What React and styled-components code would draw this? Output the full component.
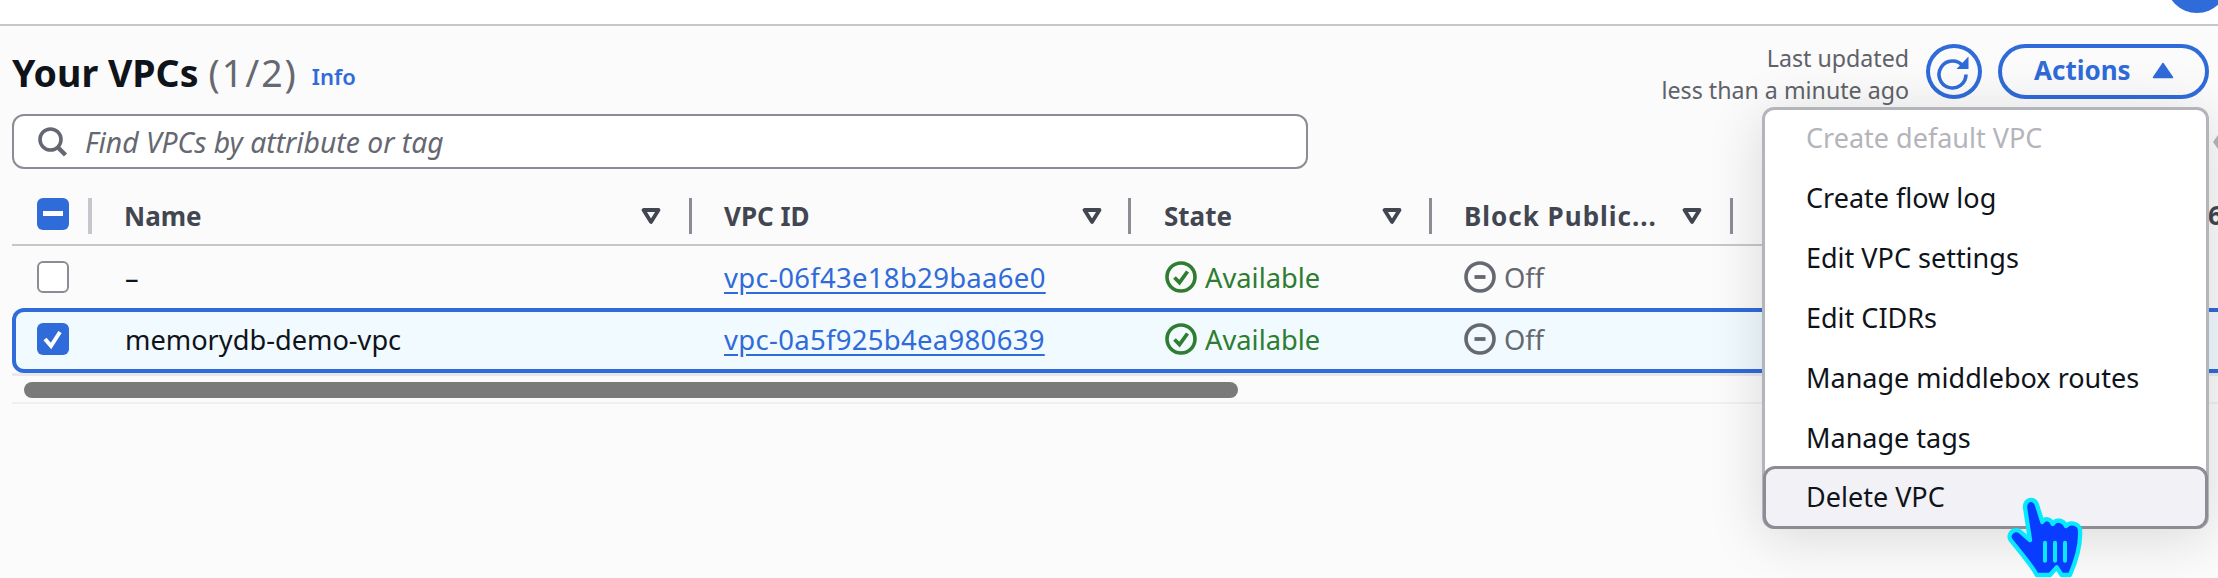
import React from "react";
import styled, { createGlobalStyle } from "styled-components";

const Global = createGlobalStyle`
  html, body { margin: 0; padding: 0; background: #fbfbfb; }
  body { font-family: "Noto Sans", "Open Sans", sans-serif; overflow: hidden; }
`;

const Page = styled.div`
  position: relative;
  width: 2218px;
  height: 578px;
  overflow: hidden;
  background: #fbfbfb;
`;

const TopBar = styled.div`
  height: 24px;
  background: #fff;
  border-bottom: 2px solid #c6c6cd;
`;

const Avatar = styled.div`
  position: absolute;
  left: 2166px;
  top: -49px;
  width: 62px;
  height: 62px;
  border-radius: 50%;
  background: #2f6bd9;
`;

const Content = styled.div`
  padding: 16px 9px 0 12px;
`;

const HeaderRow = styled.div`
  display: flex;
  justify-content: space-between;
  align-items: flex-start;
  height: 72px;
`;

const Title = styled.h1`
  margin: 0;
  padding-top: 9px;
  display: flex;
  align-items: baseline;
  font-size: 37.5px;
  line-height: 44px;
  font-weight: 700;
  color: #0f141a;
`;

const Count = styled.span`
  margin-left: 10px;
  font-weight: 400;
  letter-spacing: 2px;
  color: #656871;
`;

const InfoLink = styled.a`
  margin-left: 14px;
  font-size: 22px;
  font-weight: 600;
  color: #2f6bd9;
  transform: translateY(-2px);
`;

const Tools = styled.div`
  display: flex;
  align-items: flex-start;
`;

const Updated = styled.div`
  width: 300px;
  margin-right: 17px;
  text-align: right;
  font-size: 23.2px;
  line-height: 32px;
  color: #5f6269;
`;

const RefreshButton = styled.div`
  box-sizing: border-box;
  width: 56px;
  height: 55px;
  margin-top: 2px;
  margin-right: 16px;
  display: flex;
  align-items: center;
  justify-content: center;
  border: 4px solid #2f6bd9;
  border-radius: 50%;
`;

const ActionsButton = styled.div`
  box-sizing: border-box;
  width: 211px;
  height: 55px;
  margin-top: 2px;
  padding: 0 0 3px 32px;
  display: flex;
  align-items: center;
  gap: 21px;
  border: 4px solid #2f6bd9;
  border-radius: 28px;
  font-size: 26px;
  font-weight: 700;
  color: #2f6bd9;
`;

const SearchBox = styled.div`
  box-sizing: border-box;
  width: 1296px;
  height: 55px;
  display: flex;
  align-items: center;
  gap: 17px;
  padding-left: 24px;
  background: #fff;
  border: 2px solid #8c8c94;
  border-radius: 12px;
`;

const Placeholder = styled.span`
  font-size: 28.3px;
  font-style: italic;
  color: #656871;
`;

const TableHead = styled.div`
  margin-top: 29px;
  display: flex;
  align-items: stretch;
  height: 46px;
  border-bottom: 2px solid #c6c6cd;
`;

const CheckCell = styled.div`
  box-sizing: border-box;
  width: 76px;
  padding-left: 25px;
  display: flex;
  align-items: ${(p) => (p.$top ? "flex-start" : "center")};
`;

const HeadCell = styled.div`
  box-sizing: border-box;
  width: ${(p) => p.$w}px;
  height: 36px;
  display: flex;
  align-items: center;
  justify-content: space-between;
  padding-left: ${(p) => p.$pl}px;
  padding-right: ${(p) => p.$pr}px;
  border-left: ${(p) => (p.$first ? 4 : 3)}px solid ${(p) => (p.$first ? "#c6c6cd" : "#8c8c94")};
  font-size: 26px;
  font-weight: 700;
  letter-spacing: ${(p) => p.$ls || 0}px;
  color: #424650;
  white-space: nowrap;
`;

const Box = styled.div`
  box-sizing: border-box;
  width: 32px;
  height: 32px;
  display: flex;
  align-items: center;
  justify-content: center;
  border-radius: 6px;
  background: ${(p) => (p.$on ? "#2f6bd9" : "#fff")};
  border: ${(p) => (p.$on ? "none" : "2px solid #8c8c94")};
`;

const Row = styled.div`
  box-sizing: border-box;
  display: flex;
  align-items: center;
  height: ${(p) => (p.$selected ? 65 : 62)}px;
  padding-bottom: ${(p) => (p.$selected ? 3 : 0)}px;
  margin-right: -30px;
  background: ${(p) => (p.$selected ? "#f1faff" : "transparent")};
  box-shadow: ${(p) => (p.$selected ? "inset 0 0 0 4px #2f6bd9" : "none")};
  border-radius: ${(p) => (p.$selected ? 12 : 0)}px;
`;

const NameCell = styled.div`
  box-sizing: border-box;
  width: 636px;
  padding-left: 37px;
  font-size: 27.2px;
  color: #0f141a;
`;

const IdCell = styled.div`
  box-sizing: border-box;
  width: 441px;
`;

const IdLink = styled.a`
  font-size: 27.5px;
  letter-spacing: 0.3px;
  color: #2f6bd9;
  text-decoration: underline;
  text-underline-offset: 4px;
`;

const StateCell = styled.div`
  width: 299px;
  display: flex;
  align-items: center;
  gap: 8px;
  font-size: 27.3px;
  color: ${(p) => p.$color};
`;

const Track = styled.div`
  box-sizing: border-box;
  height: 31px;
  margin-right: -30px;
  border-top: 3px solid #e9e9ed;
  border-bottom: 2px solid #f0f0f0;
  padding: 6px 0 0 12px;
`;

const Thumb = styled.div`
  width: 1214px;
  height: 16px;
  border-radius: 8px;
  background: #7a7a7a;
`;

const Menu = styled.div`
  position: absolute;
  left: 1762px;
  top: 107px;
  box-sizing: border-box;
  width: 447px;
  height: 422px;
  background: #fff;
  border: 3px solid #b4b4bb;
  border-radius: 12px;
  box-shadow: 0 8px 56px rgba(0, 7, 22, 0.14);
`;

const MenuList = styled.div`
  margin-top: -3px;
`;

const MenuItem = styled.div`
  box-sizing: border-box;
  height: 60px;
  display: flex;
  align-items: center;
  padding-left: 41px;
  font-size: 27px;
  color: ${(p) => (p.$disabled ? "#b4b4bb" : "#0f141a")};
`;

const HoverItem = styled(MenuItem)`
  position: absolute;
  left: -2px;
  right: -2px;
  bottom: -3px;
  height: 63px;
  padding-left: 40px;
  padding-bottom: 2px;
  background: #f1f1f6;
  border: 3px solid #8c8c94;
  border-radius: 12px;
`;

const Cursor = styled.svg`
  position: absolute;
  left: 1980px;
  top: 480px;
`;

const EdgeGlyph = styled.span`
  position: absolute;
  left: 2208px;
  top: 197px;
  font-size: 26px;
  line-height: 36px;
  color: #424650;
  font-weight: 700;
`;

const EdgeArrow = styled.svg`
  position: absolute;
  left: 2213px;
  top: 135px;
`;

const Filter = () => (
  <svg width="20" height="20" viewBox="0 0 20 20">
    <path d="M2.5 4h15L10 16z" fill="none" stroke="#424650" strokeWidth="3.8" strokeLinejoin="round" />
  </svg>
);

const OkIcon = () => (
  <svg width="32" height="32" viewBox="0 0 32 32">
    <circle cx="16" cy="16" r="14" fill="none" stroke="#2e7d32" strokeWidth="3.6" />
    <path d="M9.5 16.5l5 5 8-11" fill="none" stroke="#2e7d32" strokeWidth="3.8" />
  </svg>
);

const OffIcon = () => (
  <svg width="32" height="32" viewBox="0 0 32 32">
    <circle cx="16" cy="16" r="14" fill="none" stroke="#656871" strokeWidth="3.6" />
    <path d="M10.5 16h11" fill="none" stroke="#656871" strokeWidth="3.8" />
  </svg>
);

const Check = () => (
  <svg width="22" height="22" viewBox="0 0 22 22">
    <path d="M3 11l6 7 9-14" fill="none" stroke="#fff" strokeWidth="4" />
  </svg>
);

const Minus = () => (
  <svg width="20" height="6" viewBox="0 0 20 6">
    <rect width="20" height="5" fill="#fff" />
  </svg>
);

const rows = [
  { name: "–", id: "vpc-06f43e18b29baa6e0" },
  { name: "memorydb-demo-vpc", id: "vpc-0a5f925b4ea980639", selected: true },
];

const items = ["Create flow log", "Edit VPC settings", "Edit CIDRs", "Manage middlebox routes", "Manage tags"];

export default function App() {
  return (
    <Page>
      <Global />
      <TopBar />
      <Avatar />
      <Content>
        <HeaderRow>
          <Title>
            Your VPCs<Count>(1/2)</Count>
            <InfoLink>Info</InfoLink>
          </Title>
          <Tools>
            <Updated>
              Last updated
              <br />
              less than a minute ago
            </Updated>
            <RefreshButton>
              <svg width="36" height="36" viewBox="0 0 36 36">
                <path d="M27 12A13.5 13.5 0 1 0 30 20.5" fill="none" stroke="#2f6bd9" strokeWidth="3.6" />
                <path d="M20.5 15h12V2.5z" fill="#2f6bd9" />
              </svg>
            </RefreshButton>
            <ActionsButton>
              Actions
              <svg width="22" height="17" viewBox="0 0 22 17">
                <path d="M11 1.5l9.5 14h-19z" fill="#2f6bd9" stroke="#2f6bd9" strokeWidth="1.5" strokeLinejoin="round" />
              </svg>
            </ActionsButton>
          </Tools>
        </HeaderRow>
        <SearchBox>
          <svg width="30" height="30" viewBox="0 0 30 30">
            <circle cx="12.5" cy="12.5" r="10.5" fill="none" stroke="#656871" strokeWidth="3.6" />
            <path d="M19.5 20l8 8" stroke="#656871" strokeWidth="4.4" />
          </svg>
          <Placeholder>Find VPCs by attribute or tag</Placeholder>
        </SearchBox>
        <TableHead>
          <CheckCell $top>
            <Box $on>
              <Minus />
            </Box>
          </CheckCell>
          <HeadCell $first $w={601} $pl={32} $pr={28}>
            Name <Filter />
          </HeadCell>
          <HeadCell $w={439} $pl={32} $pr={26}>
            VPC ID <Filter />
          </HeadCell>
          <HeadCell $w={301} $pl={33} $pr={27}>
            State <Filter />
          </HeadCell>
          <HeadCell $w={301} $pl={32} $pr={28} $ls={1}>
            Block Public... <Filter />
          </HeadCell>
          <HeadCell $w={60} />
        </TableHead>
        {rows.map((r) => (
          <Row key={r.id} $selected={r.selected}>
            <CheckCell>
              <Box $on={r.selected}>{r.selected && <Check />}</Box>
            </CheckCell>
            <NameCell>{r.name}</NameCell>
            <IdCell>
              <IdLink>{r.id}</IdLink>
            </IdCell>
            <StateCell $color="#2e7d32">
              <OkIcon />
              Available
            </StateCell>
            <StateCell $color="#656871">
              <OffIcon />
              Off
            </StateCell>
          </Row>
        ))}
        <Track>
          <Thumb />
        </Track>
      </Content>
      <EdgeGlyph>6</EdgeGlyph>
      <EdgeArrow width="5" height="14" viewBox="0 0 5 14">
        <path d="M5 0L0 7l5 7z" fill="#b4b4bb" />
      </EdgeArrow>
      <Menu>
        <MenuList>
          <MenuItem $disabled>Create default VPC</MenuItem>
          {items.map((i) => (
            <MenuItem key={i}>{i}</MenuItem>
          ))}
        </MenuList>
        <HoverItem>Delete VPC</HoverItem>
      </Menu>
      <Cursor width="130" height="98" viewBox="0 0 390 294">
        <path
          d="M135 82C135 58 160 52 170 72L187 126C195 112 212 116 218 132C228 116 250 120 258 138C270 124 298 130 300 150C302 178 298 220 270 285L245 285L230 262L210 285L170 285C160 262 125 222 92 180C80 162 104 140 122 156L150 180z"
          fill="#0a3cff"
          stroke="#08e8ff"
          strokeWidth="13"
          strokeLinejoin="round"
        />
        <path d="M195 188v54M225 188v54M255 188v54" stroke="#08e8ff" strokeWidth="12" strokeLinecap="round" />
      </Cursor>
    </Page>
  );
}
